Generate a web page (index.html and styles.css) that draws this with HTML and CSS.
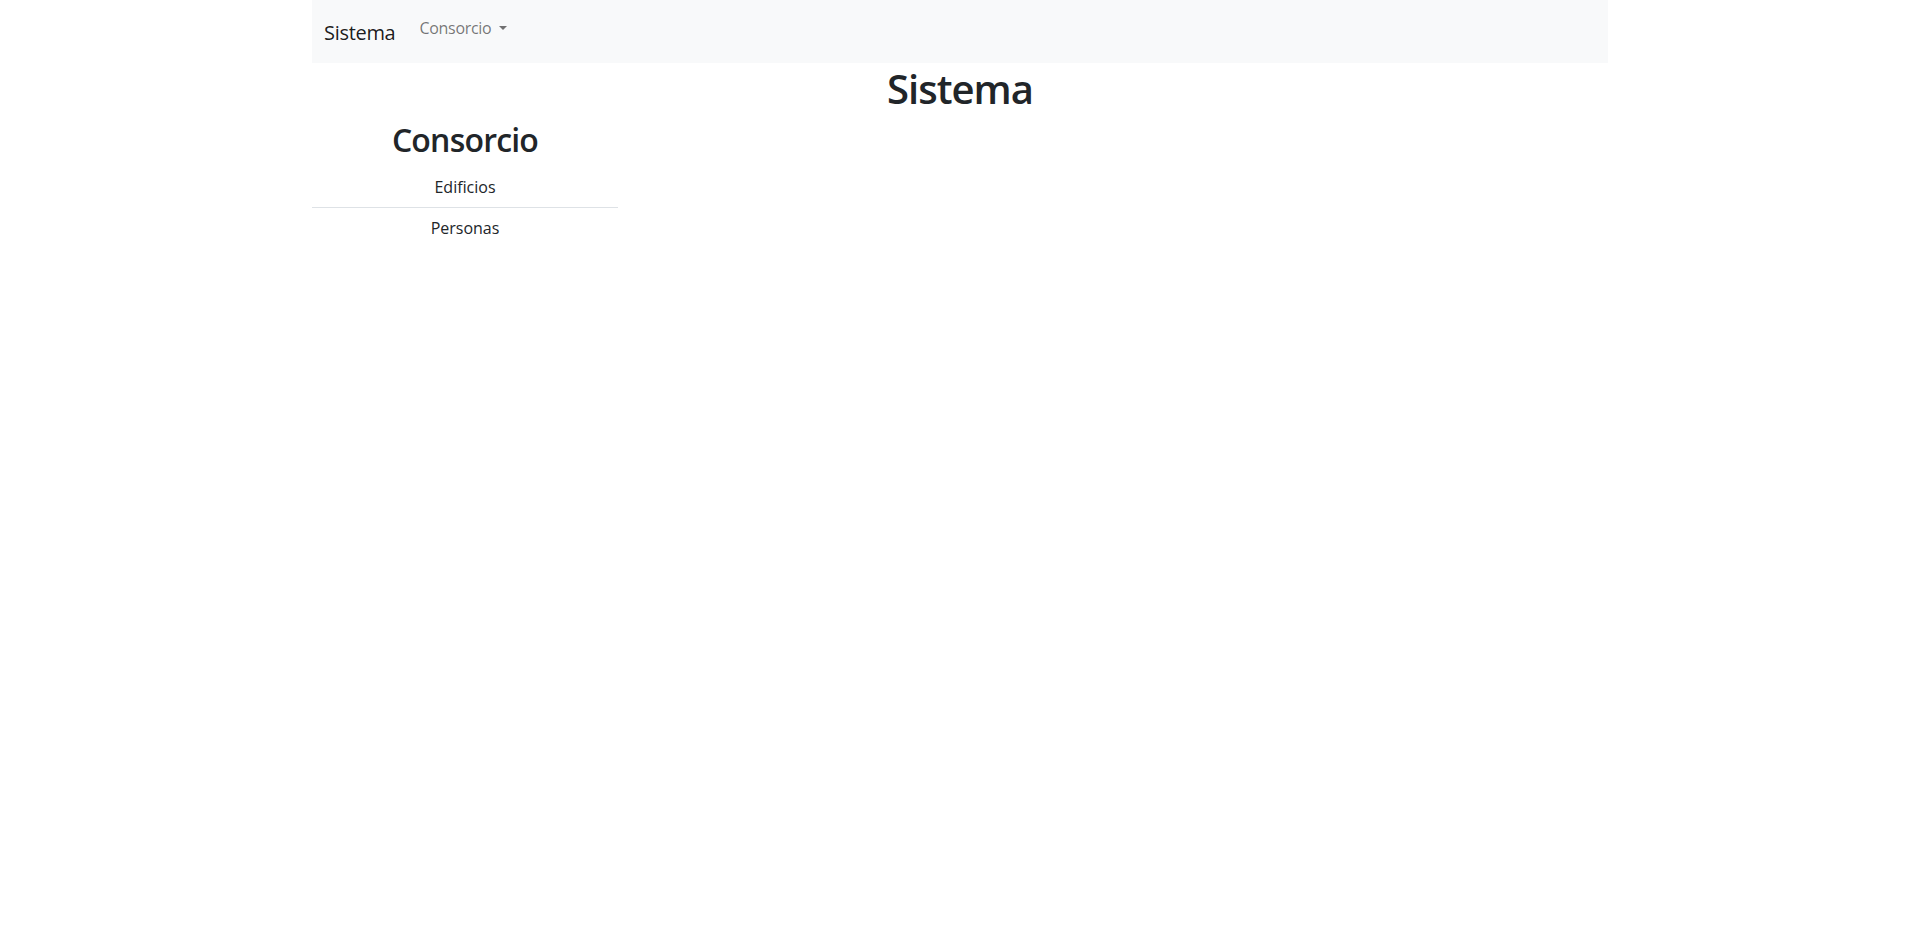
FILE: index.html
```html
<!DOCTYPE html>
<html lang="es">
<head>
<meta charset="utf-8">
<title>Sistema</title>
<link rel="stylesheet" href="styles.css">
</head>
<body>
<div class="container">
  <nav class="navbar">
    <a class="brand" href="#">Sistema</a>
    <ul class="nav">
      <li class="nav-item">
        <a class="nav-link" href="#">Consorcio <span class="caret"></span></a>
      </li>
    </ul>
  </nav>
  <h1 class="title">Sistema</h1>
  <div class="row">
    <aside class="sidebar">
      <h2 class="side-title">Consorcio</h2>
      <ul class="list">
        <li class="list-item"><a href="#">Edificios</a></li>
        <li class="list-item"><a href="#">Personas</a></li>
      </ul>
    </aside>
  </div>
</div>
</body>
</html>
```

FILE: styles.css
```css
* { box-sizing: border-box; }
html, body { margin: 0; padding: 0; }
body {
  font-family: "Open Sans", "Noto Sans", "Liberation Sans", sans-serif;
  font-size: 16px;
  line-height: 1.5;
  color: #212529;
  background: #fff;
}
a { text-decoration: none; color: inherit; }

.container {
  max-width: 1320px;
  margin: 0 auto;
  padding: 0 12px;
}

.navbar {
  display: flex;
  align-items: flex-start;
  height: 63px;
  padding: 0 12px;
  background: #f8f9fa;
}
.brand {
  margin-top: 18px;
  margin-right: 16px;
  font-size: 20px;
  line-height: 30px;
  letter-spacing: -0.3px;
  color: rgba(0, 0, 0, 0.9);
}
.nav {
  display: flex;
  list-style: none;
  margin: 0;
  padding: 0;
}
.nav-link {
  display: block;
  padding: 16px 8px 8px;
  line-height: 24px;
  letter-spacing: -0.3px;
  color: rgba(0, 0, 0, 0.55);
}
.caret {
  display: inline-block;
  margin-left: 0.255em;
  vertical-align: 0.255em;
  border-top: 0.3em solid;
  border-right: 0.3em solid transparent;
  border-left: 0.3em solid transparent;
  border-bottom: 0;
}

.title {
  margin: 2px 0 8px;
  font-size: 40px;
  line-height: 48px;
  font-weight: 600;
  letter-spacing: -1px;
  text-align: center;
}

.row {
  display: flex;
  margin: 0 -12px;
}
.sidebar {
  width: 25%;
  padding: 0 12px;
}
.side-title {
  margin: 0 0 8px;
  font-size: 32px;
  line-height: 38.4px;
  font-weight: 600;
  letter-spacing: -0.8px;
  text-align: center;
}
.list {
  list-style: none;
  margin: 0;
  padding: 0;
}
.list-item {
  padding: 8px 16px;
  text-align: center;
  border-bottom: 1px solid #dee2e6;
}
.list-item:last-child { border-bottom: 0; }
```
